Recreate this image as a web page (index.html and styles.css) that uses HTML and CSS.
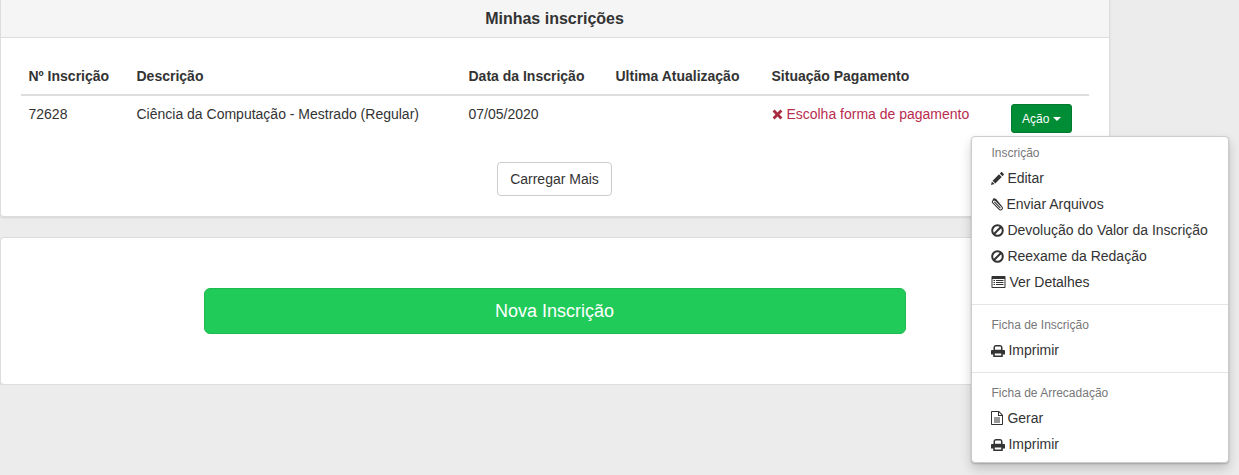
FILE: index.html
```html
<!DOCTYPE html>
<html lang="pt-BR">
<head>
    <meta charset="UTF-8">
    <meta name="viewport" content="width=device-width, initial-scale=1.0">
    <title>Minhas inscrições</title>
    <link rel="stylesheet" href="styles.css">
</head>
<body>
    <div class="container">
        <div class="panel">
            <div class="panel-heading">Minhas inscrições</div>
            <div class="panel-body">
                <table class="table">
                    <colgroup>
                        <col class="col-num">
                        <col class="col-desc">
                        <col class="col-date">
                        <col class="col-update">
                        <col class="col-status">
                        <col class="col-action">
                    </colgroup>
                    <thead>
                        <tr>
                            <th>Nº Inscrição</th>
                            <th>Descrição</th>
                            <th>Data da Inscrição</th>
                            <th>Ultima Atualização</th>
                            <th>Situação Pagamento</th>
                            <th></th>
                        </tr>
                    </thead>
                    <tbody>
                        <tr>
                            <td>72628</td>
                            <td>Ciência da Computação - Mestrado (Regular)</td>
                            <td>07/05/2020</td>
                            <td></td>
                            <td class="text-danger">
                                <svg class="icon icon-times" viewBox="0 0 11 11"><path d="M2.6.6 5.5 3.5 8.4.6 10.4 2.6 7.5 5.5 10.4 8.4 8.4 10.4 5.5 7.5 2.6 10.4.6 8.4 3.5 5.5.6 2.6Z"/></svg>
                                Escolha forma de pagamento
                            </td>
                            <td><button class="btn-action">Ação <span class="caret"></span></button></td>
                        </tr>
                    </tbody>
                </table>
                <div class="more">
                    <button class="btn-more">Carregar Mais</button>
                </div>
            </div>
        </div>

        <div class="panel panel-new">
            <button class="btn-new">Nova Inscrição</button>
        </div>
    </div>

    <ul class="dropdown-menu">
        <li class="dropdown-header">Inscrição</li>
        <li>
            <svg class="icon icon-pencil" viewBox="0 0 13 13"><path d="M0 13 .9 9.4 3.6 12.1ZM1.6 8.7 8 2.3 10.7 5 4.3 11.4ZM8.8 1.5 9.9.4C10.3 0 10.9 0 11.3.4L12.6 1.7C13 2.1 13 2.7 12.6 3.1L11.5 4.2Z"/></svg>
            Editar
        </li>
        <li>
            <svg class="icon icon-clip" viewBox="0 0 13 13"><path d="M11.8 9.2 5 2.3C4.1 1.4 2.9 1.4 2.1 2.2 1.3 3 1.3 4.2 2.2 5.1L8.6 11.6C9.6 12.6 11 12.6 11.8 11.8 12.6 11 12.7 9.9 11.8 8.9L5.4 1.2C4.3.2 2.9.2 1.9.9"/><path d="M3.6 3.6 10.2 10.4"/></svg>
            Enviar Arquivos
        </li>
        <li>
            <svg class="icon icon-ban" viewBox="0 0 13 13"><circle cx="6.5" cy="6.5" r="5.3"/><path d="M2.8 10.2 10.2 2.8"/></svg>
            Devolução do Valor da Inscrição
        </li>
        <li>
            <svg class="icon icon-ban" viewBox="0 0 13 13"><circle cx="6.5" cy="6.5" r="5.3"/><path d="M2.8 10.2 10.2 2.8"/></svg>
            Reexame da Redação
        </li>
        <li>
            <svg class="icon icon-list" viewBox="0 0 14 12"><path fill-rule="evenodd" d="M1 0H13C13.6 0 14 .4 14 1V11C14 11.6 13.6 12 13 12H1C.4 12 0 11.6 0 11V1C0 .4.4 0 1 0ZM1 3V11H13V3ZM2 4H3.5V5H2ZM4.5 4H12V5H4.5ZM2 6H3.5V7H2ZM4.5 6H12V7H4.5ZM2 8H3.5V9H2ZM4.5 8H12V9H4.5Z"/></svg>
            Ver Detalhes
        </li>
        <li class="divider"></li>
        <li class="dropdown-header">Ficha de Inscrição</li>
        <li>
            <svg class="icon icon-print" viewBox="0 0 14 12"><path fill-rule="evenodd" d="M5 0H9C10.4 0 11.5 1.1 11.5 2.5V5H13C13.6 5 14 5.4 14 6V9.5H11.8V12H2.2V9.5H0V6C0 5.4.4 5 1 5H2.5V2.5C2.5 1.1 3.6 0 5 0ZM5 1.5C4.4 1.5 4 1.9 4 2.5V4.8H10V2.5C10 1.9 9.6 1.5 9 1.5ZM3.8 8.6V10.6H10.2V8.6Z"/></svg>
            Imprimir
        </li>
        <li class="divider"></li>
        <li class="dropdown-header">Ficha de Arrecadação</li>
        <li>
            <svg class="icon icon-file" viewBox="0 0 12 14"><path fill-rule="evenodd" d="M.7 0H8L12 4V13.3C12 13.7 11.7 14 11.3 14H.7C.3 14 0 13.7 0 13.3V.7C0 .3.3 0 .7 0ZM1 1V13H11V5H7V1ZM8 1.4V4H10.6ZM3 6.5H9V7.5H3ZM3 8.5H9V9.5H3ZM3 10.5H9V11.5H3Z"/></svg>
            Gerar
        </li>
        <li>
            <svg class="icon icon-print" viewBox="0 0 14 12"><path fill-rule="evenodd" d="M5 0H9C10.4 0 11.5 1.1 11.5 2.5V5H13C13.6 5 14 5.4 14 6V9.5H11.8V12H2.2V9.5H0V6C0 5.4.4 5 1 5H2.5V2.5C2.5 1.1 3.6 0 5 0ZM5 1.5C4.4 1.5 4 1.9 4 2.5V4.8H10V2.5C10 1.9 9.6 1.5 9 1.5ZM3.8 8.6V10.6H10.2V8.6Z"/></svg>
            Imprimir
        </li>
    </ul>
</body>
</html>
```

FILE: styles.css
```css
* {
    box-sizing: border-box;
}
body {
    margin: 0;
    background: #ececec;
    color: #333;
    font-family: "Liberation Sans", Arial, sans-serif;
    font-size: 14px;
    line-height: 20px;
}
.container {
    width: 1110px;
}
.panel {
    background: white;
    border: 1px solid #ddd;
    border-top: none;
    border-radius: 0 0 4px 4px;
    box-shadow: 0 1px 2px rgba(0,0,0,0.1);
}
.panel-heading {
    height: 38px;
    padding-right: 1px;
    background: #f5f5f5;
    border-bottom: 1px solid #ddd;
    text-align: center;
    font-size: 16px;
    font-weight: bold;
    line-height: 37px;
}
.panel-body {
    padding: 20px 20.5px 20px 19.5px;
}
.table {
    width: 100%;
    table-layout: fixed;
    border-collapse: collapse;
    margin-bottom: 21px;
}
.col-num { width: 108px; }
.col-desc { width: 332px; }
.col-date { width: 147px; }
.col-update { width: 156px; }
.col-status { width: 239px; }
.table th {
    padding: 8px;
    text-align: left;
    border-bottom: 2px solid #ddd;
}
.table td {
    padding: 8px;
    vertical-align: top;
    white-space: nowrap;
}
.text-danger {
    color: #b92c4f;
}
.btn-action {
    display: block;
    height: 29px;
    margin-left: 0.5px;
    padding: 0 10px;
    background: #008d36;
    border: 1px solid #007a2f;
    border-radius: 3px;
    color: white;
    font: 12px/18px "Liberation Sans", Arial, sans-serif;
}
.caret {
    display: inline-block;
    vertical-align: middle;
    border-top: 4px solid white;
    border-left: 4px solid transparent;
    border-right: 4px solid transparent;
}
.more {
    text-align: center;
}
.btn-more {
    width: 115px;
    height: 34px;
    background: white;
    border: 1px solid #ccc;
    border-radius: 4px;
    color: #333;
    font: 14px/20px "Liberation Sans", Arial, sans-serif;
}
.panel-new {
    margin-top: 20px;
    padding: 50px 203px;
    border-top: 1px solid #ddd;
    border-radius: 4px;
}
.btn-new {
    display: block;
    width: 702px;
    height: 46px;
    padding: 0 1px 0 0;
    background: #20cb5a;
    border: 1px solid #1cbb51;
    border-radius: 6px;
    color: white;
    font: 18px/24px "Liberation Sans", Arial, sans-serif;
}
.dropdown-menu {
    position: absolute;
    top: 136px;
    left: 971px;
    width: 258px;
    margin: 0;
    padding: 5px 0;
    list-style: none;
    background: white;
    border: 1px solid #ccc;
    border-radius: 4px;
    box-shadow: 0 1px 2px rgba(0,0,0,0.2), 0 6px 12px rgba(0,0,0,0.175);
}
.dropdown-menu li {
    padding: 3px 19.5px;
    height: 26px;
    white-space: nowrap;
}
.dropdown-menu .dropdown-header {
    height: 23px;
    color: #777;
    font-size: 12px;
    line-height: 17px;
}
.dropdown-menu .divider {
    height: 1px;
    padding: 0;
    margin: 9px 0;
    background: #e5e5e5;
}
.icon {
    display: inline-block;
    vertical-align: -2px;
    margin-left: -1px;
    fill: #333;
}
.icon-times { width: 11px; height: 11px; vertical-align: -1px; margin-left: 0; fill: #a82c3f; }
.icon-pencil { width: 13px; height: 13px; }
.icon-clip { width: 12px; height: 13px; fill: none; stroke: #333; stroke-width: 1.1; }
.icon-ban { width: 13px; height: 13px; fill: none; stroke: #333; stroke-width: 2; }
.icon-list { width: 15px; height: 12px; vertical-align: -1px; }
.icon-print { width: 14px; height: 12px; vertical-align: -2px; }
.icon-file { width: 12px; height: 14px; margin-right: 1px; }
```
